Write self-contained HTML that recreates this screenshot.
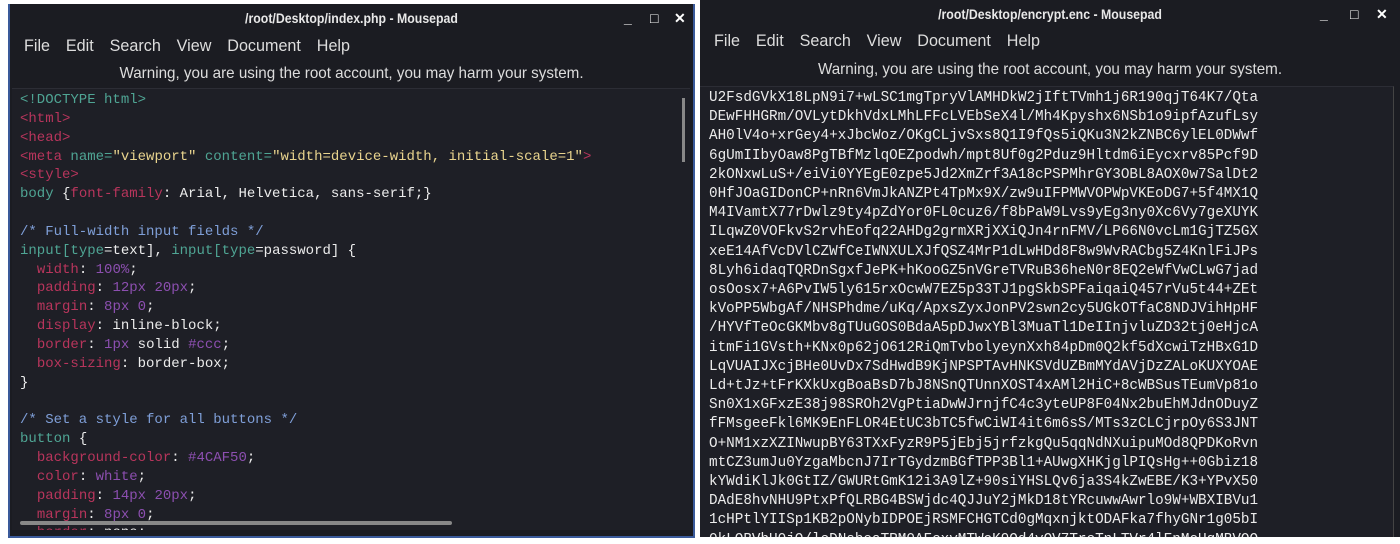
<!DOCTYPE html>
<html><head><style>
*{margin:0;padding:0;box-sizing:border-box}
body{width:1400px;height:544px;background:#fff;position:relative;overflow:hidden;font-family:"Liberation Sans",sans-serif}
.win{position:absolute;background:#1b1c22;color:#e4e4e4}
.title{position:absolute;left:0;right:0;top:0;height:28px;text-align:center;font-size:14px;font-weight:bold;line-height:28px;color:#e8e8e8;transform:scaleX(.88)}
.ctl{position:absolute;top:6px;font-size:14px;color:#fff;font-weight:bold}
.menu{position:absolute;top:32px;font-size:17px;color:#ddd;word-spacing:12px;transform-origin:left;transform:scaleX(.95)}
.warn{position:absolute;left:0;right:0;text-align:center;font-size:16px;color:#ddd;transform:scaleX(.95)}
.ed{position:absolute;background:#1e1f26;border-top:1px solid #2c2d35;overflow:hidden;font-family:"Liberation Mono",monospace;white-space:pre}
.r{color:#b8355c}.g{color:#4fa594}.y{color:#e9d48e}.c{color:#7f9fd8}.p{color:#8c4fb0}.w{color:#ececec}
</style></head><body>
<div class="win" style="left:8px;top:4px;width:687px;height:534px;border:2px solid #3a5a9a;border-top:none">
 <div class="title">/root/Desktop/index.php - Mousepad</div>
 <div class="ctl" style="left:614px">_</div><div class="ctl" style="left:640px">&#9633;</div><div class="ctl" style="left:664px">&#10005;</div>
 <div class="menu" style="left:14px">File Edit Search View Document Help</div>
 <div class="warn" style="top:61px">Warning, you are using the root account, you may harm your system.</div>
 <div class="ed" style="left:2px;top:84px;width:678px;height:442px;padding:2px 0 0 8px;font-size:14px;line-height:18.85px;color:#ececec"><span class="g">&lt;!DOCTYPE html&gt;</span>
<span class="r">&lt;html&gt;</span>
<span class="r">&lt;head&gt;</span>
<span class="r">&lt;meta</span> <span class="g">name=</span><span class="y">"viewport"</span> <span class="g">content=</span><span class="y">"width=device-width, initial-scale=1"</span><span class="r">&gt;</span>
<span class="r">&lt;style&gt;</span>
<span class="g">body</span> {<span class="r">font-family</span>: Arial, Helvetica, sans-serif;}

<span class="c">/* Full-width input fields */</span>
<span class="g">input[</span><span class="g">type</span>=text], <span class="g">input[type</span>=password] {
  <span class="r">width</span>: <span class="p">100%</span>;
  <span class="r">padding</span>: <span class="p">12px 20px</span>;
  <span class="r">margin</span>: <span class="p">8px 0</span>;
  <span class="r">display</span>: inline-block;
  <span class="r">border</span>: <span class="p">1px</span> solid <span class="p">#ccc</span>;
  <span class="r">box-sizing</span>: border-box;
}

<span class="c">/* Set a style for all buttons */</span>
<span class="g">button</span> {
  <span class="r">background-color</span>: <span class="p">#4CAF50</span>;
  <span class="r">color</span>: <span class="p">white</span>;
  <span class="r">padding</span>: <span class="p">14px 20px</span>;
  <span class="r">margin</span>: <span class="p">8px 0</span>;
  <span class="r">border</span>: none;</div>
 <div style="position:absolute;left:10px;top:517px;width:432px;height:4px;background:#888;border-radius:2px"></div>
 <div style="position:absolute;left:672px;top:94px;width:3px;height:64px;background:#888"></div>
</div>
<div class="win" style="left:700px;top:0;width:700px;height:537px">
 <div class="title">/root/Desktop/encrypt.enc - Mousepad</div>
 <div class="ctl" style="left:620px">_</div><div class="ctl" style="left:650px">&#9633;</div><div class="ctl" style="left:676px">&#10005;</div>
 <div class="menu" style="left:14px;top:31px">File Edit Search View Document Help</div>
 <div class="warn" style="top:61px">Warning, you are using the root account, you may harm your system.</div>
 <div class="ed" style="left:0;top:86px;width:694px;height:451px;padding:2px 0 0 9px;font-size:14.3px;line-height:19.2px;color:#ececec;border-right:1px solid #444">U2FsdGVkX18LpN9i7+wLSC1mgTpryVlAMHDkW2jIftTVmh1j6R190qjT64K7/Qta
DEwFHHGRm/OVLytDkhVdxLMhLFFcLVEbSeX4l/Mh4Kpyshx6NSb1o9ipfAzufLsy
AH0lV4o+xrGey4+xJbcWoz/OKgCLjvSxs8Q1I9fQs5iQKu3N2kZNBC6ylEL0DWwf
6gUmIIbyOaw8PgTBfMzlqOEZpodwh/mpt8Uf0g2Pduz9Hltdm6iEycxrv85Pcf9D
2kONxwLuS+/eiVi0YYEgE0zpe5Jd2XmZrf3A18cPSPMhrGY3OBL8AOX0w7SalDt2
0HfJOaGIDonCP+nRn6VmJkANZPt4TpMx9X/zw9uIFPMWVOPWpVKEoDG7+5f4MX1Q
M4IVamtX77rDwlz9ty4pZdYor0FL0cuz6/f8bPaW9Lvs9yEg3ny0Xc6Vy7geXUYK
ILqwZ0VOFkvS2rvhEofq22AHDg2grmXRjXXiQJn4rnFMV/LP66N0vcLm1GjTZ5GX
xeE14AfVcDVlCZWfCeIWNXULXJfQSZ4MrP1dLwHDd8F8w9WvRACbg5Z4KnlFiJPs
8Lyh6idaqTQRDnSgxfJePK+hKooGZ5nVGreTVRuB36heN0r8EQ2eWfVwCLwG7jad
osOosx7+A6PvIW5ly615rxOcwW7EZ5p33TJ1pgSkbSPFaiqaiQ457rVu5t44+ZEt
kVoPP5WbgAf/NHSPhdme/uKq/ApxsZyxJonPV2swn2cy5UGkOTfaC8NDJVihHpHF
/HYVfTeOcGKMbv8gTUuGOS0BdaA5pDJwxYBl3MuaTl1DeIInjvluZD32tj0eHjcA
itmFi1GVsth+KNx0p62jO612RiQmTvbolyeynXxh84pDm0Q2kf5dXcwiTzHBxG1D
LqVUAIJXcjBHe0UvDx7SdHwdB9KjNPSPTAvHNKSVdUZBmMYdAVjDzZALoKUXYOAE
Ld+tJz+tFrKXkUxgBoaBsD7bJ8NSnQTUnnXOST4xAMl2HiC+8cWBSusTEumVp81o
Sn0X1xGFxzE38j98SROh2VgPtiaDwWJrnjfC4c3yteUP8F04Nx2buEhMJdnODuyZ
fFMsgeeFkl6MK9EnFLOR4EtUC3bTC5fwCiWI4it6m6sS/MTs3zCLCjrpOy6S3JNT
O+NM1xzXZINwupBY63TXxFyzR9P5jEbj5jrfzkgQu5qqNdNXuipuMOd8QPDKoRvn
mtCZ3umJu0YzgaMbcnJ7IrTGydzmBGfTPP3Bl1+AUwgXHKjglPIQsHg++0Gbiz18
kYWdiKlJk0GtIZ/GWURtGmK12i3A9lZ+90siYHSLQv6ja3S4kZwEBE/K3+YPvX50
DAdE8hvNHU9PtxPfQLRBG4BSWjdc4QJJuY2jMkD18tYRcuwwAwrlo9W+WBXIBVu1
1cHPtlYIISp1KB2pONybIDPOEjRSMFCHGTCd0gMqxnjktODAFka7fhyGNr1g05bI
0kLQBVhU0jQ/lcDNsbeaTRM0AFcxyMTWoK9Qd4yQV7TrcTnLTVr4lEnMoUqMBVOQ</div>
</div>
</body></html>
